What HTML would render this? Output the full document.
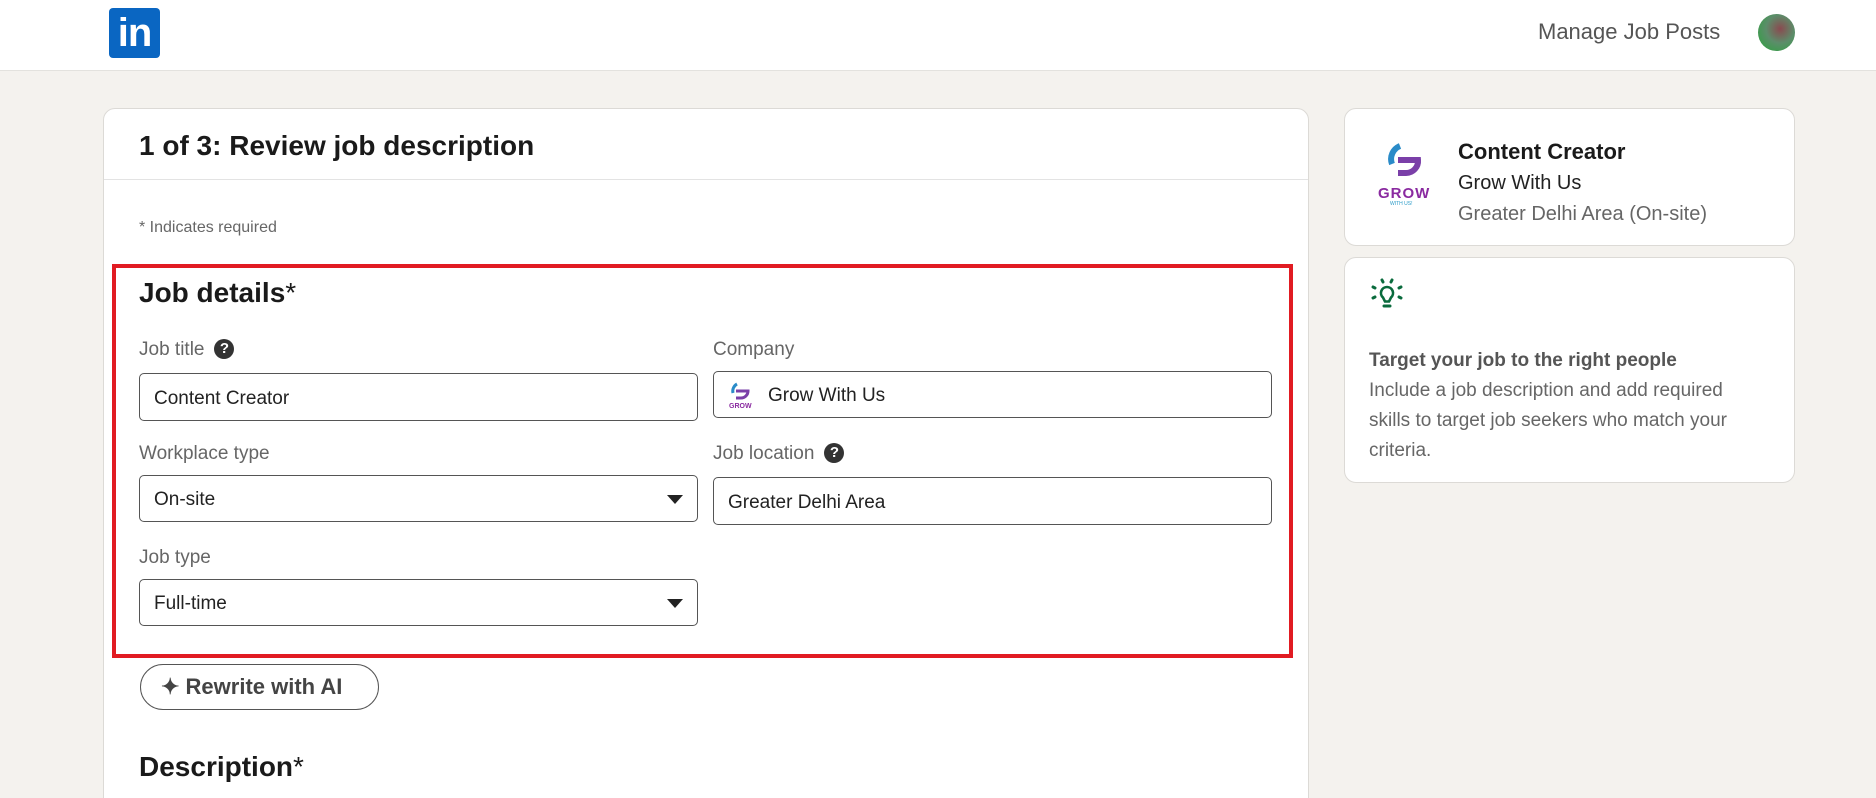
<!DOCTYPE html>
<html><head><meta charset="utf-8"><style>
*{box-sizing:border-box;margin:0;padding:0}
html{height:798px;overflow:hidden}
body{width:1876px;height:798px;overflow:hidden;background:#f4f2ee;font-family:"Liberation Sans",sans-serif;color:rgba(0,0,0,.9);position:relative}
.a{position:absolute;white-space:nowrap}
.hdr{position:absolute;left:0;top:0;width:1876px;height:71px;background:#fff;border-bottom:1px solid #e3e2de}
.card{position:absolute;background:#fff;border:1px solid #dcdad6;border-radius:12px}
.lbl{position:absolute;font-size:19px;color:#666;white-space:nowrap}
.inp{position:absolute;border:1px solid #555;border-radius:5px;background:#fff;font-size:19px;padding-left:14px;padding-top:3px;display:flex;align-items:center;color:#222}
.arr{position:absolute;right:14px;top:50%;margin-top:-4px;width:0;height:0;border-left:8px solid transparent;border-right:8px solid transparent;border-top:9px solid #222}
.q{display:inline-block;width:20px;height:20px;border-radius:50%;background:#333;color:#fff;font-size:15px;font-weight:bold;text-align:center;line-height:20px;vertical-align:2px;margin-left:10px}
</style></head><body>
<div class="hdr"></div>
<div class="a" style="left:109px;top:8px;width:51px;height:50px;background:#0a66c2;border-radius:4px;color:#fff;font-weight:bold;font-size:40px;line-height:50px;text-align:center;letter-spacing:-1px">in</div>
<div class="a" style="left:1538px;top:19px;font-size:22px;color:#555">Manage Job Posts</div>
<div class="a" style="left:1758px;top:14px;width:37px;height:37px;border-radius:50%;background:radial-gradient(circle at 60% 40%,#8a4a50 0,#5c8d6a 45%,#3f9a4f 75%)"></div>

<div class="card" style="left:103px;top:108px;width:1206px;height:720px"></div>
<div class="a" style="left:139px;top:130px;font-size:28px;font-weight:bold;color:#1a1a1a">1 of 3: Review job description</div>
<div class="a" style="left:104px;top:179px;width:1204px;height:1px;background:#e3e3e3"></div>
<div class="a" style="left:139px;top:219px;font-size:16px;color:#666">* Indicates required</div>

<div class="a" style="left:112px;top:264px;width:1181px;height:394px;border:4px solid #e11b22"></div>
<div class="a" style="left:139px;top:277px;font-size:28px;font-weight:bold;color:#1a1a1a">Job details<span style="font-weight:normal">*</span></div>

<div class="lbl" style="left:139px;top:339px">Job title<span class="q">?</span></div>
<div class="inp" style="left:139px;top:373px;width:559px;height:48px">Content Creator</div>
<div class="lbl" style="left:713px;top:339px">Company</div>
<div class="inp" style="left:713px;top:371px;width:559px;height:47px"><svg width="28" height="30" viewBox="0 0 28 30"><path d="M9 3a8 8 0 0 0 -4 9" stroke="#2a8bc8" stroke-width="3" fill="none"/><path d="M8 10h12a7 7 0 0 1-7 7h-5" stroke="#7a3fa8" stroke-width="3" fill="none"/><text x="1" y="27" font-size="7" fill="#8a2aa0" font-family="Liberation Sans" font-weight="bold">GROW</text></svg><span style="margin-left:12px">Grow With Us</span></div>

<div class="lbl" style="left:139px;top:443px">Workplace type</div>
<div class="inp" style="left:139px;top:475px;width:559px;height:47px">On-site<div class="arr"></div></div>
<div class="lbl" style="left:713px;top:443px">Job location<span class="q">?</span></div>
<div class="inp" style="left:713px;top:477px;width:559px;height:48px">Greater Delhi Area</div>

<div class="lbl" style="left:139px;top:547px">Job type</div>
<div class="inp" style="left:139px;top:579px;width:559px;height:47px">Full-time<div class="arr"></div></div>

<div class="a" style="left:140px;top:664px;width:239px;height:46px;border:1.5px solid #555;border-radius:23px;font-size:22px;font-weight:bold;color:#444;padding-left:20px;line-height:43px">✦ Rewrite with AI</div>
<div class="a" style="left:139px;top:751px;font-size:28px;font-weight:bold;color:#1a1a1a">Description<span style="font-weight:normal">*</span></div>

<div class="card" style="left:1344px;top:108px;width:451px;height:138px"></div>
<svg class="a" style="left:1378px;top:140px" width="56" height="66" viewBox="0 0 56 66"><path d="M22 6a14 14 0 0 0-8 18" stroke="#2a8bc8" stroke-width="6" fill="none"/><path d="M20 20h20a12 12 0 0 1-12 13h-8" stroke="#7a3fa8" stroke-width="6" fill="none"/><text x="0" y="58" font-size="15" fill="#8a2aa0" font-family="Liberation Sans" font-weight="bold" letter-spacing="1">GROW</text><text x="12" y="65" font-size="5" fill="#2a9bc8" font-family="Liberation Sans">WITH US!</text></svg>
<div class="a" style="left:1458px;top:139px;font-size:22px;font-weight:bold;color:#1a1a1a">Content Creator</div>
<div class="a" style="left:1458px;top:172px;font-size:20px;color:#222">Grow With Us</div>
<div class="a" style="left:1458px;top:203px;font-size:20px;color:#666">Greater Delhi Area (On-site)</div>

<div class="card" style="left:1344px;top:257px;width:451px;height:226px"></div>
<svg class="a" style="left:1370px;top:277px" width="34" height="34" viewBox="0 0 34 34" fill="none" stroke="#0a6b3d" stroke-width="3" stroke-linecap="round"><path d="M17 10a6 6 0 0 0-4 10.5l2 4h4l2-4A6 6 0 0 0 17 10z" stroke-width="2.6"/><path d="M14 29h6"/><path d="M12 3l1 2M22 3l-1 2M3 10l2 1M31 10l-2 1M3 21l2-1M31 21l-2-1"/></svg>
<div class="a" style="left:1369px;top:346px;font-size:19px;line-height:30px;color:#666;white-space:normal;width:392px"><b style="color:#555">Target your job to the right people</b><br>Include a job description and add required skills to target job seekers who match your criteria.</div>
</body></html>
